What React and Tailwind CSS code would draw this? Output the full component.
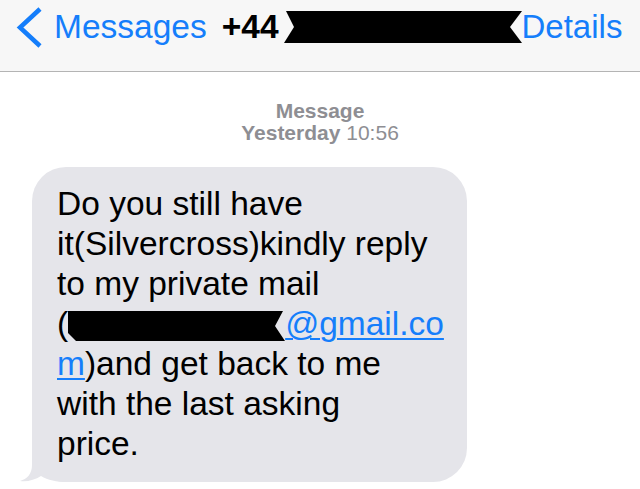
import React from 'react';

const BLUE = 'text-[#157efb]';

const Chevron = () => (
  <svg className="ml-[15px] mt-[7px] w-[28px] h-[42px] shrink-0" viewBox="0 0 28 42">
    <path d="M25 2 L5 20.5 L25 39" fill="none" stroke="#157efb" strokeWidth="4.5" />
  </svg>
);

const HeaderRedaction = () => (
  <svg className="mt-[11px] ml-[5px] w-[238px] h-[32px] shrink-0" viewBox="0 0 238 32">
    <polygon points="2,0 238,0 226,16 238,32 0,32 10,16" fill="#000" />
  </svg>
);

const MailRedaction = () => (
  <svg className="inline-block align-[-6px] w-[217px] h-[30px]" viewBox="0 0 217 30">
    <polygon points="0,0 215,0 207,15 217,30 8,30 0,22" fill="#000" />
  </svg>
);

const Tail = () => (
  <svg className="absolute left-[-14px] bottom-0 w-[60px] h-[45px]" viewBox="0 0 60 45">
    <path
      d="M14 0 L14 28 C14 37 9 42 2 44 C9 45 17 43 23 39 C30 43 38 45 50 45 L60 45 L60 0 Z"
      fill="#e5e5ea"
    />
  </svg>
);

export default function App() {
  return (
    <div className="w-[640px] h-[489px] overflow-hidden bg-white font-['Liberation_Sans',Arial,sans-serif]">
      {/* nav bar */}
      <div className="h-[72px] bg-[#f7f7f7] border-b border-[#b4b4b4] flex items-start">
        <Chevron />
        <span className={`ml-[11px] pt-[10px] text-[33.5px] leading-none ${BLUE}`}>Messages</span>
        <span className="ml-[15px] pt-[10px] text-[33.5px] leading-none font-bold text-black">+44</span>
        <HeaderRedaction />
        <span className={`pt-[10px] text-[33px] leading-none ${BLUE}`}>Details</span>
      </div>

      {/* timestamp */}
      <div className="mt-[28px] text-center text-[21px] leading-[22px] text-[#8e8e93]">
        <div className="font-bold">Message</div>
        <div>
          <span className="font-bold">Yesterday</span> 10:56
        </div>
      </div>

      {/* bubble */}
      <div className="relative mt-[23px] ml-[32px] w-[435px] bg-[#e5e5ea] rounded-[34px] pt-[17px] pb-[18px] pl-[25px] text-[33.5px] leading-[40px] text-black whitespace-nowrap">
        <Tail />
        <div className="relative">
          <div>Do you still have</div>
          <div>it(Silvercross)kindly reply</div>
          <div>to my private mail</div>
          <div>
            (<MailRedaction />
            <span className={`${BLUE} underline decoration-2 underline-offset-[3px]`}>@gmail.co</span>
          </div>
          <div>
            <span className={`${BLUE} underline decoration-2 underline-offset-[3px]`}>m</span>)and get back to me
          </div>
          <div>with the last asking</div>
          <div>price.</div>
        </div>
      </div>
    </div>
  );
}
